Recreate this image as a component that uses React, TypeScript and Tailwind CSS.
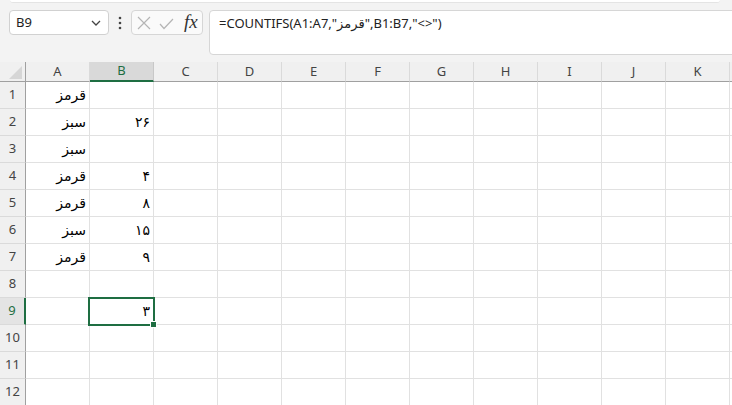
import React from "react";

const cols = ["A", "B", "C", "D", "E", "F", "G", "H", "I", "J", "K", ""];
const data: Record<number, [string, string]> = {
  1: ["قرمز", ""],
  2: ["سبز", "۲۶"],
  3: ["سبز", ""],
  4: ["قرمز", "۴"],
  5: ["قرمز", "۸"],
  6: ["سبز", "۱۵"],
  7: ["قرمز", "۹"],
  9: ["", "۳"],
};

export default function App() {
  const rows = Array.from({ length: 12 }, (_, i) => i + 1);
  return (
    <div
      className="relative w-[732px] h-[405px] overflow-hidden bg-[#f3f3f3] text-[#222]"
      style={{ fontFamily: '"Noto Sans", "Open Sans", "DejaVu Sans", sans-serif' }}
    >
      {/* top ribbon edge */}
      <div className="h-[3px] pl-[10px] pr-[12px]">
        <div className="h-full bg-white rounded-b-[4px] border-b border-[#e4e4e4]" />
      </div>

      {/* formula bar */}
      <div className="flex items-start h-[59px] pt-[7px] pl-[9px]">
        <div className="shrink-0 flex items-center justify-between w-[100px] h-[25px] bg-white border border-[#d1d1d1] rounded-[4px] pl-[6px] pr-[6px]">
          <span className="text-[13px] leading-none text-[#222]">B9</span>
          <svg width="10" height="6" viewBox="0 0 10 6" className="mr-[1px]">
            <path d="M1 1 L5 5 L9 1" fill="none" stroke="#444" strokeWidth="1.3" />
          </svg>
        </div>
        <div className="shrink-0 w-[22px] h-[25px] flex items-center justify-center">
          <svg width="4" height="14" viewBox="0 0 4 14">
            <circle cx="2" cy="2" r="1.3" fill="#444" />
            <circle cx="2" cy="7" r="1.3" fill="#444" />
            <circle cx="2" cy="12" r="1.3" fill="#444" />
          </svg>
        </div>
        <div className="shrink-0 flex items-center w-[72px] h-[25px] bg-[#fafafa] border border-[#d6d6d6] rounded-[4px]">
          <svg width="14" height="14" viewBox="0 0 14 14" className="ml-[5px]">
            <path d="M1 1 L13 13 M13 1 L1 13" stroke="#b5b5b5" strokeWidth="1.2" fill="none" />
          </svg>
          <svg width="15" height="12" viewBox="0 0 15 12" className="ml-[8px] mt-[2px]">
            <path d="M1 6 L5 10.5 L14 1" stroke="#b5b5b5" strokeWidth="1.2" fill="none" />
          </svg>
          <span
            className="ml-[10px] text-[19px] leading-none italic text-[#333] -mt-[3px]"
            style={{ fontFamily: '"Liberation Serif", "DejaVu Serif", serif' }}
          >
            fx
          </span>
        </div>
        <div className="shrink-0 ml-[6px] w-[540px] h-[45px] bg-white border border-[#d6d6d6] rounded-[4px] pl-[9px] pt-[5px] text-[13px] leading-[14px] text-[#222]">
          =COUNTIFS(A1:A7,"قرمز",B1:B7,"&lt;&gt;")
        </div>
      </div>

      {/* grid */}
      <div className="relative bg-white">
        {/* header row */}
        <div className="flex h-[20px] bg-[#f0f0f0]">
          <div className="relative w-[26px] shrink-0 border-b border-r border-[#a0a0a0]">
            <svg width="13" height="13" viewBox="0 0 13 13" className="absolute right-[3px] bottom-[2px]">
              <path d="M13 0 L13 13 L0 13 Z" fill="#d6d6d6" />
            </svg>
          </div>
          {cols.map((c, i) => (
            <div
              key={i}
              className={
                c === "B"
                  ? "w-[64px] shrink-0 flex items-center justify-center text-[13px] text-[#1e6e42] bg-[#d9d9d9] border-r border-[#c8c8c8] border-b-2 border-b-[#1e6e42]"
                  : "w-[64px] shrink-0 flex items-center justify-center text-[13px] text-[#444] border-r border-[#dadada] border-b border-b-[#a0a0a0]"
              }
            >
              {c}
            </div>
          ))}
        </div>
        {rows.map((r) => {
          const d = data[r];
          const sel = r === 9;
          return (
            <div key={r} className="flex h-[27px]">
              <div
                className={
                  sel
                    ? "w-[26px] shrink-0 flex items-center justify-center text-[13px] text-[#1e6e42] bg-[#e4e4e4] border-b border-[#dadada] border-r-2 border-r-[#1e6e42]"
                    : "w-[26px] shrink-0 flex items-center justify-center text-[13px] text-[#444] bg-[#f0f0f0] border-b border-[#dadada] border-r border-r-[#a0a0a0]"
                }
              >
                {r}
              </div>
              {cols.map((c, i) => (
                <div
                  key={i}
                  className="w-[64px] shrink-0 flex items-center justify-end pr-[3px] border-r border-b border-[#e1e1e1] text-[14px] text-black"
                  style={{ fontFamily: '"DejaVu Sans", sans-serif' }}
                  dir="rtl"
                >
                  <span dir="rtl" className="w-full text-right">
                    {d && i < 2 ? d[i] : ""}
                  </span>
                </div>
              ))}
            </div>
          );
        })}

        {/* selection */}
        <div className="absolute left-[88px] top-[235px] w-[67px] h-[29px] border-2 border-[#1e6e42] pointer-events-none" />
        <div className="absolute left-[150px] top-[259px] w-[7px] h-[7px] bg-[#1e6e42] border border-white" />
      </div>
    </div>
  );
}
